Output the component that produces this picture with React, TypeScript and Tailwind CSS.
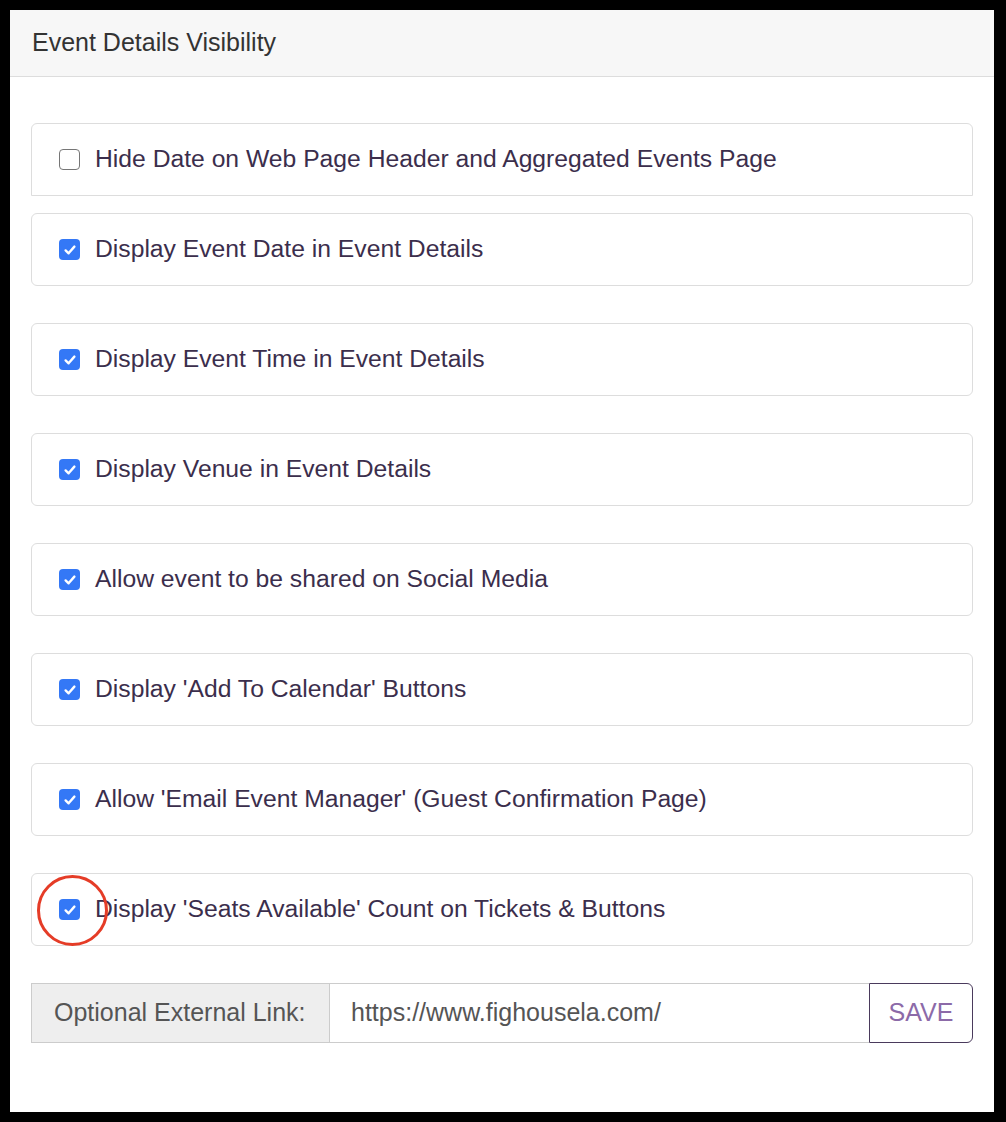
import React from "react";

const items: { label: string; checked: boolean }[] = [
  { label: "Hide Date on Web Page Header and Aggregated Events Page", checked: false },
  { label: "Display Event Date in Event Details", checked: true },
  { label: "Display Event Time in Event Details", checked: true },
  { label: "Display Venue in Event Details", checked: true },
  { label: "Allow event to be shared on Social Media", checked: true },
  { label: "Display 'Add To Calendar' Buttons", checked: true },
  { label: "Allow 'Email Event Manager' (Guest Confirmation Page)", checked: true },
  { label: "Display 'Seats Available' Count on Tickets & Buttons", checked: true },
];

function Box({ checked }: { checked: boolean }) {
  if (!checked) {
    return (
      <span className="block w-[21px] h-[21px] rounded-[4px] border-[1.5px] border-[#767676] bg-white shrink-0" />
    );
  }
  return (
    <span className="flex items-center justify-center w-[21px] h-[21px] rounded-[4px] bg-[#3478f6] shrink-0">
      <svg width="14" height="14" viewBox="0 0 14 14" fill="none">
        <path d="M2.6 7.4 L5.6 10.3 L11.4 3.6" stroke="white" strokeWidth="2.4" strokeLinecap="round" strokeLinejoin="round" />
      </svg>
    </span>
  );
}

export default function App() {
  return (
    <div className="w-[1006px] h-[1122px] bg-black p-[10px] pr-[12px]" style={{ fontFamily: '"Liberation Sans", Arial, sans-serif' }}>
      <div className="w-[984px] h-[1102px] bg-white flex flex-col">
        <div className="h-[67px] bg-[#f7f7f7] border-b border-[#dddddd] flex items-center pl-[22px] text-[25px] text-[#333333]">
          Event Details Visibility
        </div>
        <div className="px-[21px] pt-[46px] flex flex-col">
          {items.map((it, i) => (
            <div
              key={i}
              className={
                "relative h-[73px] w-[942px] border border-[#dddddd] flex items-center pl-[27px] gap-[15px] " +
                (i === 0 ? "rounded-t-[6px] mb-[17px]" : "rounded-[6px] mb-[37px]")
              }
            >
              <Box checked={it.checked} />
              <span className="text-[24.7px] text-[#3b2e4c] leading-none">{it.label}</span>
              {i === items.length - 1 && (
                <span className="absolute left-[5px] top-[1px] w-[71px] h-[71px] rounded-full border-[3.5px] border-[#e53c27] pointer-events-none" />
              )}
            </div>
          ))}
          <div className="flex h-[60px] w-[942px]">
            <div className="w-[299px] bg-[#eeeeee] border border-[#cccccc] flex items-center pl-[22px] text-[25px] text-[#555555]">
              Optional External Link:
            </div>
            <div className="flex-1 border-y border-[#cccccc] flex items-center pl-[21px] text-[25px] text-[#555555]">
              https://www.fighousela.com/
            </div>
            <div className="w-[104px] border border-[#4a3a5c] rounded-r-[6px] flex items-center justify-center text-[25px] text-[#8c6aa8]">
              SAVE
            </div>
          </div>
        </div>
      </div>
    </div>
  );
}
